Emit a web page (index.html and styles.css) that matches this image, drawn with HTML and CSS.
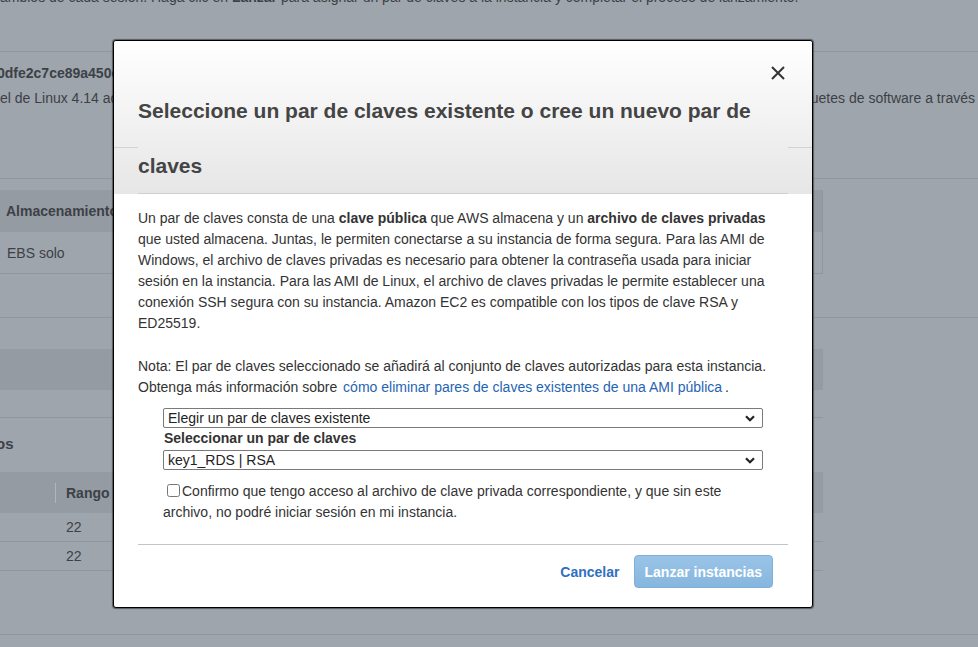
FILE: index.html
```html
<!DOCTYPE html>
<html lang="es">
<head>
<meta charset="utf-8">
<title>Lanzar instancias</title>
<link rel="stylesheet" href="styles.css">
</head>
<body>
<div class="page">
  <div class="intro">cambios de cada sesión. Haga clic en <b>Lanzar</b> para asignar un par de claves a la instancia y completar el proceso de lanzamiento.</div>
  <div class="rule rule-a"></div>
  <div class="ami-id">0dfe2c7ce89a450c4</div>
  <div class="ami-desc"><span>el de Linux 4.14 adaptado para Amazon EC2</span><span>quetes de software a través</span></div>
  <div class="rule rule-b"></div>
  <div class="bg-table t1">
    <div class="bg-head"><span class="cell-first">Almacenamiento</span></div>
    <div class="bg-row"><span class="cell-first">EBS solo</span></div>
  </div>
  <div class="rule rule-c"></div>
  <div class="bg-bar"></div>
  <div class="rule-short"></div>
  <div class="bg-title">os</div>
  <div class="bg-table t2">
    <div class="bg-head"><span class="col0"></span><span class="sep"></span><span class="col1">Rango</span></div>
    <div class="bg-row2"><span class="col0"></span><span class="col1">22</span></div>
    <div class="bg-row2"><span class="col0"></span><span class="col1">22</span></div>
  </div>
  <div class="rule rule-d"></div>
</div>

<div class="modal">
  <div class="modal-header">
    <div class="close-row">
      <svg class="close" width="14" height="14" viewBox="0 0 14 14"><path d="M1 1L13 13M13 1L1 13" stroke="#333" stroke-width="2" fill="none"/></svg>
    </div>
    <h2 class="modal-title">Seleccione un par de claves existente o cree un nuevo par de claves</h2>
  </div>
  <div class="modal-body">
    <p class="intro-p">Un par de claves consta de una <b>clave pública</b> que AWS almacena y un <b>archivo de claves privadas</b> que usted almacena. Juntas, le permiten conectarse a su instancia de forma segura. Para las AMI de Windows, el archivo de claves privadas es necesario para obtener la contraseña usada para iniciar sesión en la instancia. Para las AMI de Linux, el archivo de claves privadas le permite establecer una conexión SSH segura con su instancia. Amazon EC2 es compatible con los tipos de clave RSA y ED25519.</p>
    <p class="note">Nota: El par de claves seleccionado se añadirá al conjunto de claves autorizadas para esta instancia. Obtenga más información sobre <a class="link" href="#">cómo eliminar pares de claves existentes de una AMI pública</a>.</p>
    <div class="form">
      <div class="select-wrap">
        <select class="select"><option>Elegir un par de claves existente</option></select>
        <svg class="chev" width="10" height="7" viewBox="0 0 10 7"><path d="M1 1.2L5 5.2L9 1.2" stroke="#222" stroke-width="2.2" fill="none"/></svg>
      </div>
      <div class="label">Seleccionar un par de claves</div>
      <div class="select-wrap">
        <select class="select"><option>key1_RDS | RSA</option></select>
        <svg class="chev" width="10" height="7" viewBox="0 0 10 7"><path d="M1 1.2L5 5.2L9 1.2" stroke="#222" stroke-width="2.2" fill="none"/></svg>
      </div>
      <label class="confirm"><input type="checkbox" class="check">Confirmo que tengo acceso al archivo de clave privada correspondiente, y que sin este archivo, no podré iniciar sesión en mi instancia.</label>
    </div>
    <div class="footer">
      <a class="cancel" href="#">Cancelar</a>
      <button class="launch" type="button">Lanzar instancias</button>
    </div>
  </div>
</div>
</body>
</html>
```

FILE: styles.css
```css
html, body {
  margin: 0;
  padding: 0;
}
body {
  width: 978px;
  height: 647px;
  overflow: hidden;
  background: #9fa5ac;
  font-family: "Liberation Sans", Arial, sans-serif;
  font-size: 14px;
  color: #3c4147;
  position: relative;
}
.page {
  display: flex;
  flex-direction: column;
}
.intro {
  margin-top: -13px;
  margin-left: -7px;
  line-height: 20px;
  white-space: nowrap;
}
.rule {
  height: 1px;
  background: #8f969d;
}
.rule-a { margin-top: 44px; }
.ami-id {
  margin-top: 11px;
  margin-left: -3px;
  line-height: 20px;
  font-weight: bold;
  font-size: 14px;
  white-space: nowrap;
}
.ami-desc {
  margin-top: 5px;
  line-height: 20px;
  display: flex;
  justify-content: space-between;
  white-space: nowrap;
  padding-right: 3px;
}
.rule-b { margin-top: 70px; }
.bg-table {
  width: 823px;
  box-sizing: border-box;
}
.t1 {
  margin-top: 11px;
  border-right: 1px solid #8f969d;
  border-bottom: 1px solid #8f969d;
}
.bg-head {
  height: 42px;
  background: #959ba2;
  display: flex;
  align-items: center;
  font-weight: bold;
}
.bg-row {
  height: 41px;
  display: flex;
  align-items: center;
}
.cell-first {
  padding-left: 6px;
}
.bg-row .cell-first { padding-left: 7px; }
.rule-c { margin-top: 43px; }
.bg-bar {
  margin-top: 31px;
  width: 823px;
  height: 41px;
  background: #959ba2;
}
.rule-short {
  margin-top: 27px;
  width: 823px;
  height: 1px;
  background: #8f969d;
}
.bg-title {
  margin-top: 16px;
  margin-left: -4px;
  line-height: 20px;
  font-weight: bold;
  font-size: 15px;
}
.t2 {
  margin-top: 18px;
}
.t2 .bg-head {
  height: 41px;
}
.col0 {
  width: 55px;
  flex: none;
}
.sep {
  width: 1px;
  height: 20px;
  background: #b1b6bc;
}
.col1 {
  padding-left: 10px;
}
.bg-row2 {
  height: 28px;
  border-bottom: 1px solid #8f969d;
  display: flex;
  align-items: center;
}
.bg-row2 .col1 { padding-left: 11px; }
.rule-d { margin-top: 63px; }

/* modal */
.modal {
  position: absolute;
  left: 113px;
  top: 40px;
  width: 700px;
  height: 568px;
  box-sizing: border-box;
  border: 1px solid #000;
  border-radius: 3px;
  background: #fff;
  box-shadow: 0 0 1px 1px rgba(0, 0, 0, 0.45);
  color: #333;
  display: flex;
  flex-direction: column;
}
.modal-header {
  position: relative;
  background: linear-gradient(#ffffff, #e6e6e6);
  border-radius: 3px 3px 0 0;
}
.modal-header::before,
.modal-header::after {
  content: "";
  position: absolute;
  top: 106px;
  width: 24px;
  height: 1px;
  background: #d2d2d2;
}
.modal-header::before { left: 0; }
.modal-header::after { right: 0; }
.close-row {
  display: flex;
  justify-content: flex-end;
  padding: 25px 27px 0 0;
  height: 14px;
}
.close {
  display: block;
}
.modal-title {
  margin: 3px 24px 0;
  font-size: 21px;
  font-weight: bold;
  line-height: 55px;
  color: #444;
  border-bottom: 1px solid #cfcfcf;
}
.modal-body {
  padding: 14px 24px 0;
  flex: 1;
  display: flex;
  flex-direction: column;
}
.intro-p {
  margin: 0;
  line-height: 21px;
}
.note {
  margin: 22px 0 0;
  line-height: 21px;
}
.link {
  color: #1f64b2;
  text-decoration: none;
  margin-left: 2px;
  margin-right: 3px;
}
.form {
  margin: 10px 0 0 25px;
  width: 600px;
}
.select-wrap {
  position: relative;
  height: 20px;
}
.select {
  appearance: none;
  -webkit-appearance: none;
  display: block;
  width: 600px;
  height: 20px;
  box-sizing: border-box;
  border: 1px solid #7a7a7a;
  border-radius: 2px;
  background: #fff;
  padding: 0 0 0 4px;
  margin: 0;
  font-family: "Liberation Sans", Arial, sans-serif;
  font-size: 14px;
  color: #222;
}
.chev {
  position: absolute;
  right: 8px;
  top: 7px;
}
.label {
  font-weight: bold;
  line-height: 21px;
  padding-left: 1px;
  margin-bottom: 1px;
  color: #333;
}
.confirm {
  display: block;
  margin-top: 11px;
  line-height: 21px;
}
.check {
  width: 13px;
  height: 13px;
  margin: 0 2px 0 4px;
  vertical-align: -1px;
}
.footer {
  margin-top: 21px;
  border-top: 1px solid #c4c4c4;
  padding: 10px 15px 0 0;
  display: flex;
  justify-content: flex-end;
  align-items: center;
  gap: 14px;
}
.cancel {
  color: #2f70bf;
  font-weight: bold;
  text-decoration: none;
}
.launch {
  height: 33px;
  padding: 0 10px;
  border: 1px solid #7fb0d9;
  border-radius: 4px;
  background: linear-gradient(#99c4e7, #86b6de);
  color: #fff;
  font-family: "Liberation Sans", Arial, sans-serif;
  font-size: 14px;
  font-weight: bold;
}
```
